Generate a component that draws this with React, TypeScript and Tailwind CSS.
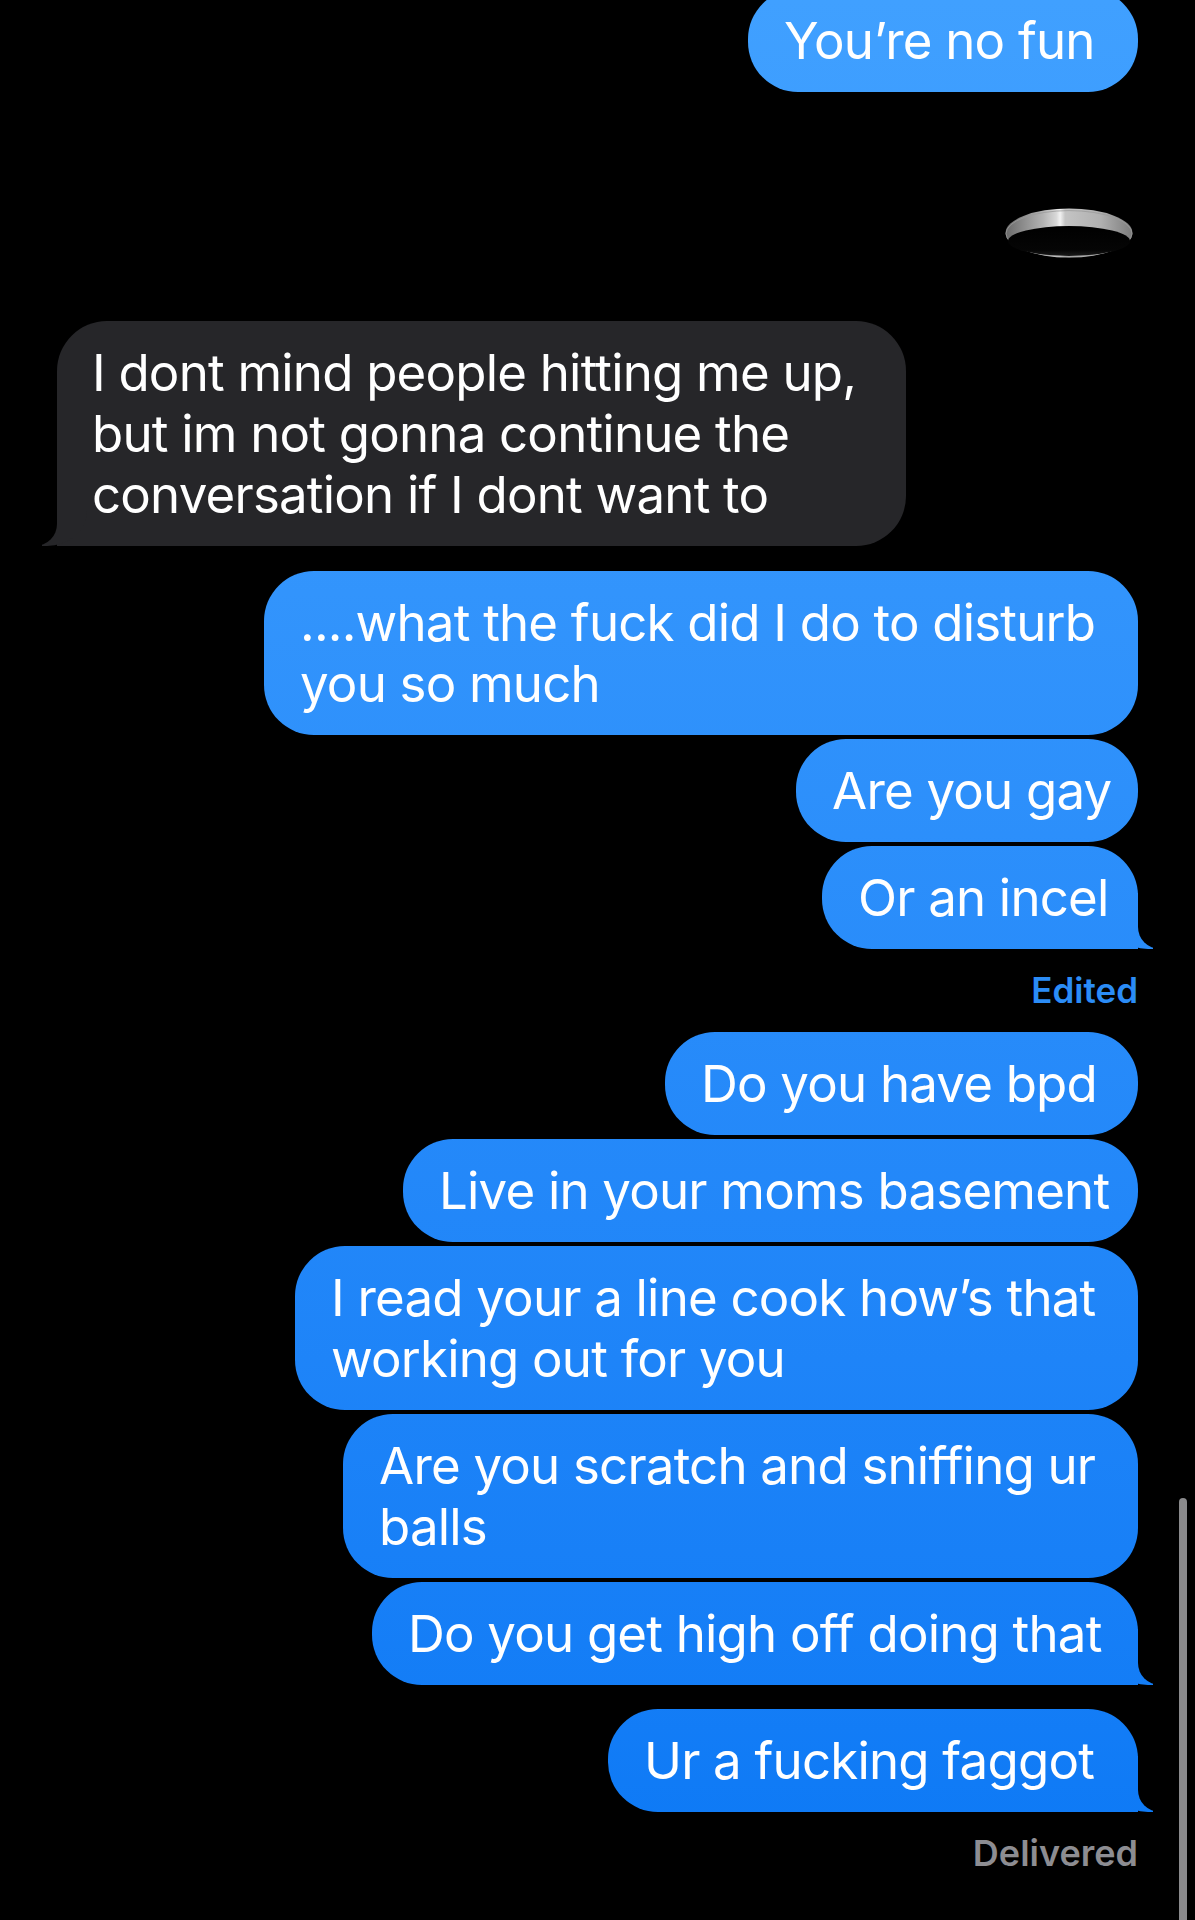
import React from "react";

const blue = "bg-fixed bg-linear-to-b from-[#40a0ff] to-[#0a78f5]";

type BubbleProps = {
  text: React.ReactNode;
  w: string;
  tail?: boolean;
  mt?: string;
};

function Bubble({ text, w, tail = false, mt = "mt-[4px]" }: BubbleProps) {
  return (
    <div
      className={`relative ${mt} ${w} rounded-[50px] ${tail ? "rounded-br-none" : ""} ${blue} px-[36px] py-[21px] text-[51px] leading-[61px] tracking-[-0.8px] whitespace-nowrap text-white`}
    >
      {tail && (
        <>
          <span className={`absolute bottom-0 right-[-15px] h-[56px] w-[45px] rounded-bl-[40px_35px] ${blue}`} />
          <span className="absolute bottom-0 right-[-57px] h-[56px] w-[57px] rounded-bl-[22px] bg-black" />
        </>
      )}
      <span className="relative">{text}</span>
    </div>
  );
}

function HoleSticker() {
  return (
    <svg width="128" height="50" viewBox="0 0 128 50" className="mt-[116px] mr-[5px]">
      <defs>
        <linearGradient id="rim" x1="0" y1="0" x2="1" y2="0">
          <stop offset="0" stopColor="#6a6a6a" />
          <stop offset="0.3" stopColor="#b4b4b4" />
          <stop offset="0.4" stopColor="#d8d8d8" />
          <stop offset="0.43" stopColor="#f2f2f2" />
          <stop offset="0.47" stopColor="#c4c4c4" />
          <stop offset="0.75" stopColor="#b0b0b0" />
          <stop offset="1" stopColor="#7c7c7c" />
        </linearGradient>
        <linearGradient id="hole" x1="0" y1="0" x2="0" y2="1">
          <stop offset="0" stopColor="#000" />
          <stop offset="0.8" stopColor="#050505" />
          <stop offset="1" stopColor="#1a1a1a" />
        </linearGradient>
      </defs>
      <ellipse cx="64" cy="25" rx="63.5" ry="24.5" fill="url(#rim)" />
      <ellipse cx="64" cy="25.6" rx="63" ry="23" fill="none" stroke="#9a9a9a" strokeWidth="0.8" />
      <ellipse cx="64" cy="33" rx="61" ry="15" fill="url(#hole)" />
    </svg>
  );
}

export default function App() {
  return (
    <div className="relative h-[1920px] overflow-hidden bg-black font-['Inter','Noto_Sans',sans-serif] antialiased">
      <div className="flex flex-col items-end px-[57px]">
        <Bubble text="You’re no fun" w="w-[390px]" mt="mt-[-11px]" />

        <HoleSticker />

        {/* incoming */}
        <div className="relative mt-[63px] w-[849px] self-start rounded-[50px] rounded-bl-none bg-[#262629] px-[35px] py-[21px] text-[51px] leading-[61px] tracking-[-0.8px] whitespace-nowrap text-white">
          <span className="absolute bottom-0 left-[-15px] h-[56px] w-[45px] rounded-br-[40px_35px] bg-[#262629]" />
          <span className="absolute bottom-0 left-[-57px] h-[56px] w-[57px] rounded-br-[22px] bg-black" />
          <span className="relative">
            I dont mind people hitting me up,
            <br />
            but im not gonna continue the
            <br />
            conversation if I dont want to
          </span>
        </div>

        <Bubble
          mt="mt-[25px]"
          w="w-[874px]"
          text={
            <>
              ....what the fuck did I do to disturb
              <br />
              you so much
            </>
          }
        />
        <Bubble text="Are you gay" w="w-[342px]" />
        <Bubble text="Or an incel" w="w-[316px]" tail />

        <p className="mt-[21px] text-[35px] leading-[40px] font-semibold text-[#2b8cf6]">Edited</p>

        <Bubble text="Do you have bpd" w="w-[473px]" mt="mt-[22px]" />
        <Bubble text="Live in your moms basement" w="w-[735px]" />
        <Bubble
          w="w-[843px]"
          text={
            <>
              I read your a line cook how’s that
              <br />
              working out for you
            </>
          }
        />
        <Bubble
          w="w-[795px]"
          text={
            <>
              Are you scratch and sniffing ur
              <br />
              balls
            </>
          }
        />
        <Bubble text="Do you get high off doing that" w="w-[766px]" tail />
        <Bubble text="Ur a fucking faggot" w="w-[530px]" tail mt="mt-[24px]" />

        <p className="mt-[21px] text-[36px] leading-[40px] font-semibold text-[#8d8d92]">Delivered</p>
      </div>

      {/* scroll indicator */}
      <div className="absolute top-[1498px] right-[8px] h-[440px] w-[8px] rounded-full bg-[#8a8a8c]" />
    </div>
  );
}
